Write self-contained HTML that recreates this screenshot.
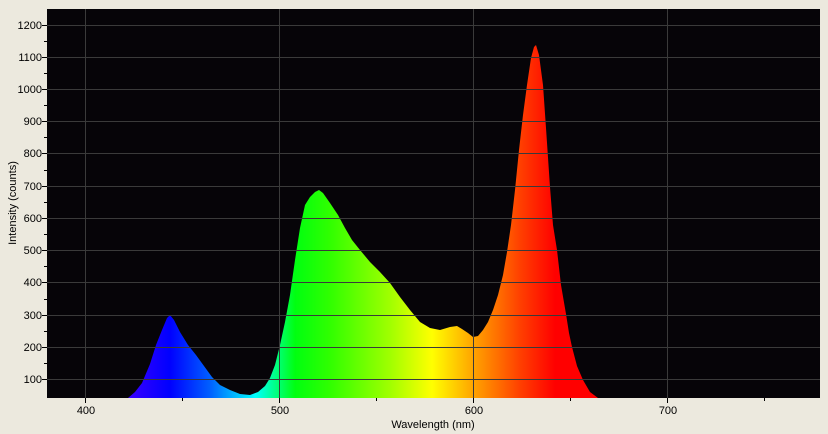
<!DOCTYPE html>
<html><head><meta charset="utf-8"><style>
html,body{margin:0;padding:0;background:#ece9de;}
svg{display:block;font-family:"Liberation Sans",sans-serif;}
</style></head><body>
<svg width="828" height="434" viewBox="0 0 828 434" xmlns="http://www.w3.org/2000/svg">
<defs>
<linearGradient id="sp" gradientUnits="userSpaceOnUse" x1="128" y1="0" x2="600" y2="0">
<stop offset="0" stop-color="#3a00ff"/>
<stop offset="0.089" stop-color="#0000ff"/>
<stop offset="0.174" stop-color="#0060ff"/>
<stop offset="0.269" stop-color="#00ffff"/>
<stop offset="0.354" stop-color="#00ff10"/>
<stop offset="0.428" stop-color="#30ff00"/>
<stop offset="0.555" stop-color="#a0ff00"/>
<stop offset="0.644" stop-color="#ffff00"/>
<stop offset="0.735" stop-color="#ffa000"/>
<stop offset="0.83" stop-color="#ff4000"/>
<stop offset="0.905" stop-color="#ff0000"/>
<stop offset="1" stop-color="#ff0000"/>
</linearGradient>
</defs>
<rect x="47" y="9" width="773" height="389" fill="#060408"/>
<polygon fill="url(#sp)" points="128,398 135,392 142,383 150,364 156,345 162,330 167,318 170,315 174,320 180,332 188,345 196,355 204,366 212,377 220,385 230,390 240,394 250,395 258,392 265,386 270,378 275,365 280,345 285,322 290,295 295,260 300,228 305,205 310,197 315,192 319,190 323,193 330,203 338,215 345,228 352,240 360,250 370,262 380,272 390,283 400,297 410,310 420,322 430,328 440,330 450,327 457,326 462,329 468,333 473,337 478,336 483,330 488,322 493,310 498,295 503,275 507,252 511,225 515,190 519,150 523,115 527,85 531,58 534,47 536,45 539,55 543,85 546,128 550,187 553,225 557,250 561,285 566,314 569,333 572,347 577,366 583,380 590,392 598,398"/>
<g stroke="#3a3a3a" stroke-width="1">
<line x1="85.5" y1="9" x2="85.5" y2="398"/>
<line x1="279.5" y1="9" x2="279.5" y2="398"/>
<line x1="473.5" y1="9" x2="473.5" y2="398"/>
<line x1="667.5" y1="9" x2="667.5" y2="398"/>
<line x1="47" y1="25.5" x2="820" y2="25.5"/>
<line x1="47" y1="57.5" x2="820" y2="57.5"/>
<line x1="47" y1="89.5" x2="820" y2="89.5"/>
<line x1="47" y1="121.5" x2="820" y2="121.5"/>
<line x1="47" y1="153.5" x2="820" y2="153.5"/>
<line x1="47" y1="186.5" x2="820" y2="186.5"/>
<line x1="47" y1="218.5" x2="820" y2="218.5"/>
<line x1="47" y1="250.5" x2="820" y2="250.5"/>
<line x1="47" y1="282.5" x2="820" y2="282.5"/>
<line x1="47" y1="315.5" x2="820" y2="315.5"/>
<line x1="47" y1="347.5" x2="820" y2="347.5"/>
<line x1="47" y1="379.5" x2="820" y2="379.5"/>
</g>
<g stroke="#000" stroke-width="1">
<line x1="42" y1="25.5" x2="47" y2="25.5"/><line x1="44" y1="41.5" x2="47" y2="41.5"/>
<line x1="42" y1="57.5" x2="47" y2="57.5"/><line x1="44" y1="73.5" x2="47" y2="73.5"/>
<line x1="42" y1="89.5" x2="47" y2="89.5"/><line x1="44" y1="105.5" x2="47" y2="105.5"/>
<line x1="42" y1="121.5" x2="47" y2="121.5"/><line x1="44" y1="137.5" x2="47" y2="137.5"/>
<line x1="42" y1="153.5" x2="47" y2="153.5"/><line x1="44" y1="170.5" x2="47" y2="170.5"/>
<line x1="42" y1="186.5" x2="47" y2="186.5"/><line x1="44" y1="202.5" x2="47" y2="202.5"/>
<line x1="42" y1="218.5" x2="47" y2="218.5"/><line x1="44" y1="234.5" x2="47" y2="234.5"/>
<line x1="42" y1="250.5" x2="47" y2="250.5"/><line x1="44" y1="266.5" x2="47" y2="266.5"/>
<line x1="42" y1="282.5" x2="47" y2="282.5"/><line x1="44" y1="299.5" x2="47" y2="299.5"/>
<line x1="42" y1="315.5" x2="47" y2="315.5"/><line x1="44" y1="331.5" x2="47" y2="331.5"/>
<line x1="42" y1="347.5" x2="47" y2="347.5"/><line x1="44" y1="363.5" x2="47" y2="363.5"/>
<line x1="42" y1="379.5" x2="47" y2="379.5"/>
<line x1="85.5" y1="398" x2="85.5" y2="403"/><line x1="182.5" y1="398" x2="182.5" y2="401"/>
<line x1="279.5" y1="398" x2="279.5" y2="403"/><line x1="376.5" y1="398" x2="376.5" y2="401"/>
<line x1="473.5" y1="398" x2="473.5" y2="403"/><line x1="570.5" y1="398" x2="570.5" y2="401"/>
<line x1="667.5" y1="398" x2="667.5" y2="403"/><line x1="764.5" y1="398" x2="764.5" y2="401"/>
</g>
<g font-size="11" fill="#000" text-anchor="end">
<text x="42" y="29">1200</text><text x="42" y="61">1100</text><text x="42" y="93">1000</text>
<text x="42" y="125">900</text><text x="42" y="157">800</text><text x="42" y="190">700</text>
<text x="42" y="222">600</text><text x="42" y="254">500</text><text x="42" y="286">400</text>
<text x="42" y="319">300</text><text x="42" y="351">200</text><text x="42" y="383">100</text>
</g>
<g font-size="11" fill="#000" text-anchor="middle">
<text x="86" y="414">400</text><text x="280" y="414">500</text>
<text x="474" y="414">600</text><text x="668" y="414">700</text>
<text x="433" y="428">Wavelength (nm)</text>
<text transform="translate(16,203) rotate(-90)">Intensity (counts)</text>
</g>
</svg>
</body></html>
